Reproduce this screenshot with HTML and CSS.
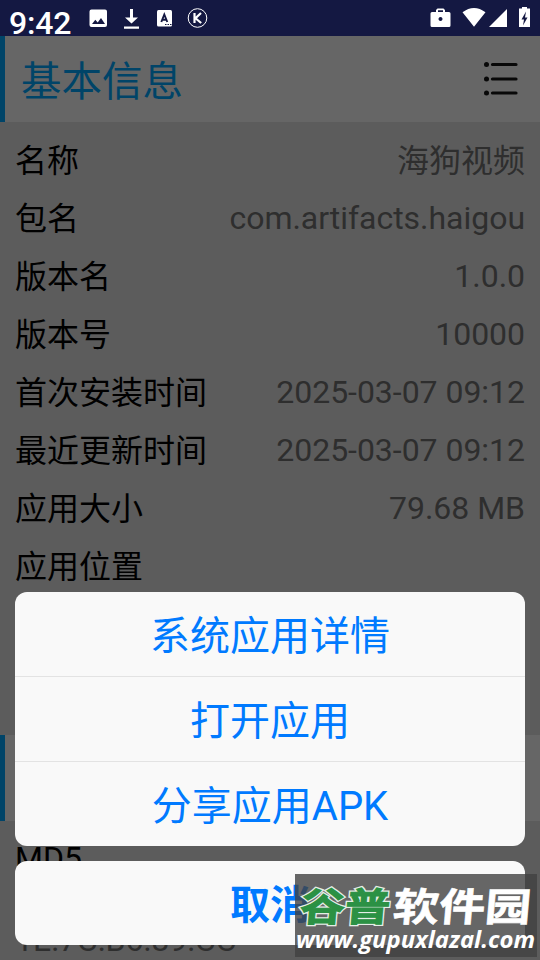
FILE: index.html
```html
<!DOCTYPE html>
<html lang="zh-CN">
<head>
<meta charset="utf-8">
<title>基本信息</title>
<link rel="stylesheet" href="styles.css">
</head>
<body>
<div class="screen">
  <header class="status">
    <span class="clock">9:42</span>
    <svg class="status-left" width="130" height="36" viewBox="0 0 130 36">
      <path fill="#fff" fill-rule="evenodd" d="M11.500 9.500h13.500a2 2 0 0 1 2 2v13.500a2 2 0 0 1-2 2h-13.500a2 2 0 0 1-2-2v-13.500a2 2 0 0 1 2-2zM12 24h13l-4-6-3.300 4.500-2.400-2.800z"/>
      <path fill="#fff" d="M50 9h3v8.500h5l-6.500 6-6.500-6h5zM44 26.500h15v2.200h-15z"/>
      <rect x="77" y="10" width="15" height="16.500" rx="1.500" fill="#fff"/>
      <path d="M81.300 22l3-7.500 3 7.500M82.500 19.700h4" fill="none" stroke="#141842" stroke-width="1.900"/>
      <path d="M85 24.500h1.500m1 0h1.500m1 0h1.500" stroke="#141842" stroke-width="1.200"/>
      <circle cx="117.500" cy="18" r="9.300" fill="none" stroke="#fff" stroke-width="1"/>
      <path d="M114.500 13v10M121 13l-5.500 5.300 5.700 4.700" fill="none" stroke="#fff" stroke-width="2.200"/>
    </svg>
    <svg class="status-right" width="110" height="36" viewBox="0 0 110 36">
      <path fill="#fff" fill-rule="evenodd" d="M2 12h4v-2l1.500-1.500h6l1.500 1.500v2h4a1.500 1.500 0 0 1 1.500 1.500v12a1.500 1.500 0 0 1-1.500 1.500h-17a1.500 1.500 0 0 1-1.500-1.500v-12a1.500 1.500 0 0 1 1.500-1.500zM8 12h5v-1.700h-5zM10.500 17a2 2 0 1 0 .01 0z"/>
      <path fill="#fff" d="M32.500 12.300q11.500-8.600 23 0l-11.500 14.500zM77 9v18h-18zM92 8.500v-1.500h5v1.500h3v18.500h-11v-18.500z"/>
      <path fill="#141842" d="M96 11.500l-4.500 8h2.500l-1 6 4.500-8h-2.500z"/>
    </svg>
  </header>
  <main class="page">
    <section class="heading">
      <h1>基本信息</h1>
      <svg class="menu" width="36" height="36" viewBox="0 0 36 36">
        <path d="M9.500 3.500h23.500M9.500 18h23.500M9.500 32h23.500" stroke="#080808" stroke-width="3.200" stroke-linecap="round"/>
        <path d="M3.500 3.500h.01M3.500 18h.01M3.500 32h.01" stroke="#080808" stroke-width="5" stroke-linecap="round"/>
      </svg>
    </section>
    <dl class="info">
      <div class="row"><dt>名称</dt><dd class="cjk">海狗视频</dd></div>
      <div class="row"><dt>包名</dt><dd>com.artifacts.haigou</dd></div>
      <div class="row"><dt>版本名</dt><dd>1.0.0</dd></div>
      <div class="row"><dt>版本号</dt><dd>10000</dd></div>
      <div class="row"><dt>首次安装时间</dt><dd>2025-03-07 09:12</dd></div>
      <div class="row"><dt>最近更新时间</dt><dd>2025-03-07 09:12</dd></div>
      <div class="row"><dt>应用大小</dt><dd>79.68 MB</dd></div>
      <div class="row"><dt>应用位置</dt></div>
    </dl>
    <section class="heading"></section>
    <div class="digest">
      <div class="digest-name">MD5</div>
      <div class="digest-value">1E:7C:B6:89:CC</div>
    </div>
  </main>
  <div class="sheet">
    <div class="actions">
      <div class="action">系统应用详情</div>
      <div class="action">打开应用</div>
      <div class="action">分享应用<span class="latin">APK</span></div>
    </div>
    <div class="cancel">取消</div>
  </div>
  <div class="watermark">
    <svg width="242" height="83" viewBox="0 0 242 83">
      <g class="brand">
        <text class="brand-green-edge" x="6" y="47" textLength="90" lengthAdjust="spacingAndGlyphs">谷普</text>
        <text class="brand-green" x="6" y="47" textLength="90" lengthAdjust="spacingAndGlyphs">谷普</text>
        <text class="brand-white" x="99" y="47" textLength="138" lengthAdjust="spacingAndGlyphs">软件园</text>
      </g>
      <text class="site" x="1" y="73.500" textLength="239" lengthAdjust="spacingAndGlyphs">www.gupuxlazal.com</text>
    </svg>
  </div>
</div>
</body>
</html>
```
FILE: styles.css
```css
* { box-sizing: border-box; }
body {
  margin: 0;
  background: #5c5c5c;
  font-family: Roboto, "Noto Sans CJK SC", sans-serif;
}
.screen {
  position: relative;
  width: 540px;
  height: 960px;
  overflow: hidden;
}
.status {
  display: flex;
  align-items: center;
  height: 36px;
  padding-left: 9px;
  background: #141842;
  color: #fff;
}
.clock {
  width: 71px;
  padding-top: 9px;
  font-size: 32px;
  line-height: 36px;
  font-weight: 500;
  letter-spacing: -.2px;
}
.status-right { margin-left: auto; }
.heading {
  display: flex;
  align-items: center;
  justify-content: space-between;
  height: 86px;
  padding: 0 21px 0 16px;
  border-left: 5px solid #004468;
  background: #666;
}
h1 {
  margin: 0;
  padding-top: 5px;
  color: #004468;
  font-size: 40.500px;
  line-height: 60px;
  font-weight: 400;
}
.info {
  height: 613px;
  margin: 0;
  padding: 9px 15px 0;
}
.row {
  display: flex;
  align-items: center;
  justify-content: space-between;
  height: 58px;
  font-size: 32px;
  line-height: 48px;
}
dt { padding-top: 2px; color: #000; }
dd { margin: 0; color: #2e2e2e; letter-spacing: -.03px; }
.cjk { padding-top: 2px; }
.digest {
  padding: 13px 15px 0;
  font-size: 32px;
}
.digest-name { height: 82px; line-height: 48px; color: #000; }
.digest-value { line-height: 48px; color: #2e2e2e; }
.sheet {
  position: absolute;
  left: 15px;
  right: 15px;
  bottom: 15px;
  display: flex;
  flex-direction: column;
  gap: 15px;
  color: #007aff;
  font-size: 40px;
  text-align: center;
}
.actions, .cancel {
  overflow: hidden;
  border-radius: 12px;
  background: #f9f9f9;
}
.action {
  height: 85px;
  padding-top: 3px;
  border-bottom: 1px solid #e3e3e3;
  line-height: 84px;
}
.action:last-child { height: 84px; border-bottom: 0; }
.cancel { height: 84px; padding-top: 3px; line-height: 84px; font-weight: 700; }
.watermark {
  position: absolute;
  left: 295px;
  top: 874px;
  width: 242px;
  height: 83px;
  background: rgba(65, 65, 65, .8);
}
.watermark svg { display: block; }
.brand { transform: skewX(-5deg) translateX(2px); }
.brand text {
  font-family: "Noto Sans CJK SC", sans-serif;
  font-size: 39px;
  font-weight: 700;
}
.brand-green-edge {
  fill: #e4eee6;
  stroke: #e4eee6;
  stroke-width: 3.500px;
}
.brand-green {
  fill: #2b9144;
  stroke: #2b9144;
  stroke-width: 1px;
}
.brand-white { fill: #fff; stroke: #fff; stroke-width: .6px; }
.site {
  fill: #fff;
  font-family: "Open Sans", sans-serif;
  font-size: 24px;
  font-style: italic;
  font-weight: 700;
}
```
